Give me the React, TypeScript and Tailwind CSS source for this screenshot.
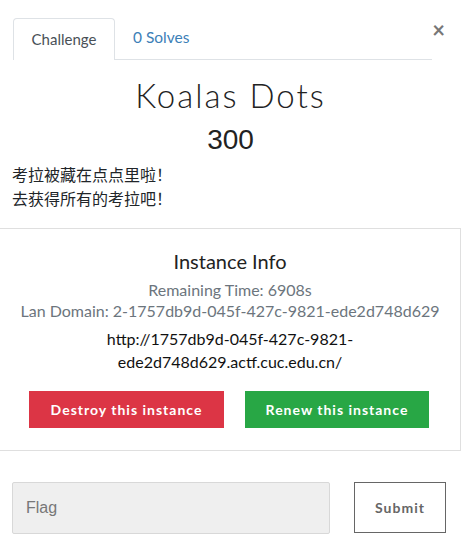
export default function App() {
  return (
    <div className="w-[461px] h-[557px] bg-white overflow-hidden font-['Lato',sans-serif] text-[#212529]">
      <div className="relative pt-[18px] pl-[13px] pr-[29px]">
        <div className="flex items-end border-b border-[#dee2e6] h-[42px]">
          <div className="w-[102px] h-[42px] -mb-px bg-white border border-b-0 border-[#dee2e6] rounded-t-[4px] flex items-center justify-center text-[15px] text-[#495057]">
            Challenge
          </div>
          <div className="h-[42px] flex items-center pl-[18px] text-[15.5px] text-[#3c80b7]">0 Solves</div>
        </div>
        <div className="absolute right-[16px] top-[18px] text-[22px] font-bold text-[#777] leading-[24px]">×</div>
      </div>

      <div className="text-center mt-[15px] text-[33px] font-light tracking-[2px] leading-[40px] text-[#222] font-['Lato',sans-serif]">
        Koalas Dots
      </div>
      <div className="text-center mt-[5px] text-[28px] leading-[40px] text-[#222] font-['Liberation_Sans',sans-serif]">
        300
      </div>
      <div className="mt-[2px] pl-[12px] text-[16px] leading-[24px] text-[#212529] font-['Noto_Sans_CJK_SC',sans-serif]">
        <div>考拉被藏在点点里啦！</div>
        <div>去获得所有的考拉吧！</div>
      </div>

      <div className="mt-[18px] border-t border-r border-b border-[#dfdfdf] h-[223px] flex flex-col items-center">
        <div className="mt-[19px] text-[20px] leading-[26px] text-[#222]">Instance Info</div>
        <div className="mt-[6px] text-[16px] leading-[20px] text-[#6c757d]">Remaining Time: 6908s</div>
        <div className="text-[16px] leading-[21px] text-[#6c757d]">Lan Domain: 2-1757db9d-045f-427c-9821-ede2d748d629</div>
        <div className="mt-[6px] text-[16px] leading-[23px] text-[#111] text-center">
          <div>http://1757db9d-045f-427c-9821-</div>
          <div>ede2d748d629.actf.cuc.edu.cn/</div>
        </div>
        <div className="mt-[18px] flex gap-[21px] w-full pl-[29px]">
          <div className="w-[195px] h-[37px] bg-[#dc3545] text-white text-[14px] font-bold tracking-[1px] flex items-center justify-center">
            Destroy this instance
          </div>
          <div className="w-[184px] h-[37px] bg-[#28a745] text-white text-[14px] font-bold tracking-[1px] flex items-center justify-center">
            Renew this instance
          </div>
        </div>
      </div>

      <div className="mt-[31px] flex pl-[12px]">
        <div className="w-[318px] h-[52px] bg-[#efefef] border border-[#d8d8d8] rounded-[2px] flex items-center pl-[13px] text-[16px] text-[#777] font-['Liberation_Sans',sans-serif]">
          Flag
        </div>
        <div className="ml-[24px] w-[92px] h-[51px] border border-[#666] flex items-center justify-center text-[14px] font-bold tracking-[1px] text-[#666]">
          Submit
        </div>
      </div>
    </div>
  );
}
